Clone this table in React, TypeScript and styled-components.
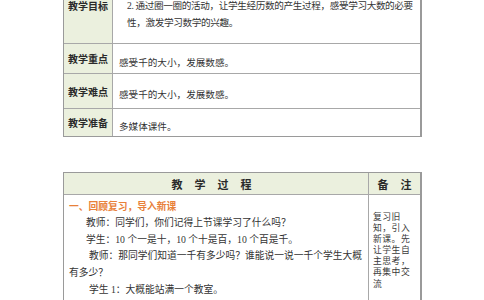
import styled, { createGlobalStyle } from "styled-components";

const GlobalStyle = createGlobalStyle`
  html, body {
    margin: 0;
    padding: 0;
    background: #ffffff;
    overflow: hidden;
  }
  body {
    font-family: "Liberation Serif", "Noto Sans CJK SC", serif;
    color: #333333;
  }
`;

const Page = styled.div`
  display: flex;
  flex-direction: column;
  gap: 35px;
  margin-top: -26px;
  padding-left: 63px;
`;

const Table = styled.div`
  width: 359px;
  box-sizing: border-box;
  border: 1px solid #9a9a9a;
  border-right-width: 2px;
`;

const InfoRow = styled.div<{ $h: number }>`
  display: grid;
  grid-template-columns: 49px 1fr;
  box-sizing: border-box;
  min-height: ${(p) => p.$h}px;
  border-top: 1px solid #a8a8a8;

  &:first-child {
    border-top: none;
  }
`;

const Label = styled.div<{ $lift?: number }>`
  display: flex;
  align-items: center;
  justify-content: center;
  box-sizing: border-box;
  background: #ebf0de;
  border-right: 1px solid #a8a8a8;
  padding-bottom: ${(p) => p.$lift ?? 0}px;
  font-family: "Noto Sans CJK SC", sans-serif;
  font-weight: 700;
  font-size: 10px;
  color: #2a2a2a;
`;

const InfoCell = styled.div`
  display: flex;
  flex-direction: column;
  justify-content: center;
  padding: 7px 0 0 6px;
  font-size: 9.6px;
  line-height: 17px;
`;

const GoalCell = styled.div`
  display: flex;
  flex-direction: column;
  padding: 4.5px 0 0 14px;
  font-size: 9.6px;
  line-height: 17px;
  letter-spacing: -0.35px;
`;

const Line = styled.div`
  white-space: nowrap;
`;

const ProcessRow = styled.div<{ $head?: boolean }>`
  display: grid;
  grid-template-columns: 1fr 52px;
  box-sizing: border-box;
  background: ${(p) => (p.$head ? "#ebf0de" : "#ffffff")};
  border-bottom: ${(p) => (p.$head ? "1px solid #a8a8a8" : "none")};
  height: ${(p) => (p.$head ? "22px" : "auto")};
  min-height: ${(p) => (p.$head ? 22 : 200)}px;
`;

const HeadCell = styled.div<{ $nudge?: number }>`
  display: flex;
  align-items: center;
  justify-content: center;
  padding-right: ${(p) => p.$nudge ?? 0}px;
  font-family: "Noto Sans CJK SC", sans-serif;
  font-weight: 700;
  font-size: 11px;
  color: #2a2a2a;
  white-space: nowrap;

  & + & {
    border-left: 1px solid #a8a8a8;
  }
`;

const HeadText = styled.span<{ $spacing: number }>`
  letter-spacing: ${(p) => p.$spacing}px;
  margin-right: -${(p) => p.$spacing}px;
`;

const Body = styled.div`
  padding: 3px 4px 0 5px;
  font-size: 9.75px;
  line-height: 16.8px;
`;

const Section = styled.div`
  font-family: "Noto Sans CJK SC", sans-serif;
  font-weight: 700;
  color: #e8813a;
`;

const Para = styled.p<{ $indent?: number }>`
  margin: 0;
  text-indent: ${(p) => p.$indent ?? 17}px;
`;

const Remark = styled.div`
  border-left: 1px solid #a8a8a8;
  padding: 17px 0 0 4px;
  font-size: 8.8px;
  line-height: 11.1px;
  letter-spacing: 0.5px;
  color: #3a3a3a;
`;

const remarkLines = ["复习旧", "知，引入", "新课。先", "让学生自", "主思考，", "再集中交", "流"];

export default function App() {
  return (
    <>
      <GlobalStyle />
      <Page>
        <Table>
          <InfoRow $h={68}>
            <Label $lift={8}>教学目标</Label>
            <GoalCell>
              <Line>1. 结合具体情境，认识计数单位“千”，会数1000以内的数。</Line>
              <Line>2. 通过圈一圈的活动，让学生经历数的产生过程，感受学习大数的必要</Line>
              <Line>性，激发学习数学的兴趣。</Line>
            </GoalCell>
          </InfoRow>
          <InfoRow $h={30}>
            <Label>教学重点</Label>
            <InfoCell>感受千的大小，发展数感。</InfoCell>
          </InfoRow>
          <InfoRow $h={35}>
            <Label>教学难点</Label>
            <InfoCell>感受千的大小，发展数感。</InfoCell>
          </InfoRow>
          <InfoRow $h={28}>
            <Label>教学准备</Label>
            <InfoCell>多媒体课件。</InfoCell>
          </InfoRow>
        </Table>

        <Table>
          <ProcessRow $head>
            <HeadCell $nudge={9}>
              <HeadText $spacing={12}>教学过程</HeadText>
            </HeadCell>
            <HeadCell>
              <HeadText $spacing={12}>备注</HeadText>
            </HeadCell>
          </ProcessRow>
          <ProcessRow>
            <Body>
              <Section>一、回顾复习，导入新课</Section>
              <Para>教师：同学们，你们记得上节课学习了什么吗？</Para>
              <Para>学生：10 个一是十，10 个十是百，10 个百是千。</Para>
              <Para $indent={20}>教师：那同学们知道一千有多少吗？谁能说一说一千个学生大概有多少？</Para>
              <Para $indent={20}>学生 1：大概能站满一个教室。</Para>
              <Para $indent={20}>学生 2：不对，大概能站满一个操场。</Para>
            </Body>
            <Remark>
              {remarkLines.map((t, i) => (
                <Line key={i}>{t}</Line>
              ))}
            </Remark>
          </ProcessRow>
        </Table>
      </Page>
    </>
  );
}
